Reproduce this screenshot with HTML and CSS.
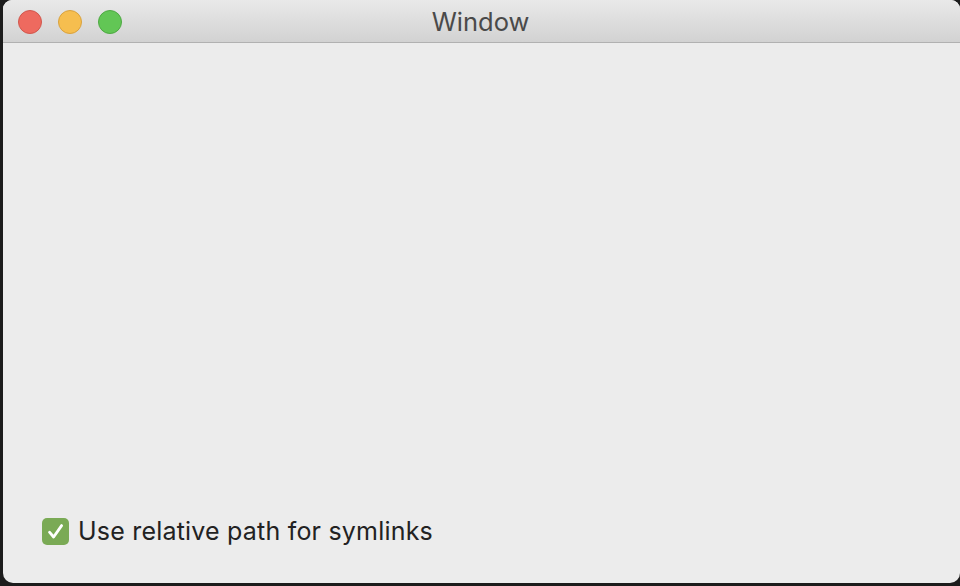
FILE: index.html
```html
<!DOCTYPE html>
<html>
<head>
<meta charset="utf-8">
<link rel="stylesheet" href="styles.css">
</head>
<body>
<div class="window">
  <div class="titlebar">
    <div class="lights">
      <span class="light red"></span>
      <span class="light yellow"></span>
      <span class="light green"></span>
    </div>
    <div class="title">Window</div>
  </div>
  <div class="content">
    <label class="check">
      <span class="box"><svg width="27" height="27" viewBox="0 0 27 27"><path d="M7.5 14.2 L11.6 19 L19.6 7.6" fill="none" stroke="#fff" stroke-width="2.8" stroke-linecap="round" stroke-linejoin="round"/></svg></span>
      <span class="label">Use relative path for symlinks</span>
    </label>
  </div>
</div>
</body>
</html>
```
FILE: styles.css
```css
html, body {
  margin: 0;
  padding: 0;
  background: #1c1c1c;
  width: 960px;
  height: 586px;
  overflow: hidden;
}
.window {
  margin-left: 3px;
  width: 957px;
  height: 583px;
  background: #ececec;
  border-radius: 9px 9px 10px 10px;
  overflow: hidden;
  display: flex;
  flex-direction: column;
  font-family: "Inter", "Noto Sans", sans-serif;
}
.titlebar {
  height: 43px;
  box-sizing: border-box;
  background: linear-gradient(#e9e9e9, #d2d2d2);
  border-bottom: 1px solid #b1b1b1;
  position: relative;
  display: flex;
  align-items: center;
  justify-content: center;
}
.lights {
  position: absolute;
  left: 15px;
  top: 10px;
  display: flex;
  gap: 16px;
}
.light {
  width: 24px;
  height: 24px;
  border-radius: 50%;
  box-sizing: border-box;
}
.red { background: #ee6a5f; border: 1px solid #d1574d; }
.yellow { background: #f6be4f; border: 1px solid #d9a23e; }
.green { background: #62c655; border: 1px solid #4ea943; }
.title {
  font-size: 25.5px;
  color: #4a4a4a;
  margin-left: -2px;
  margin-top: 1px;
}
.content {
  flex: 1;
  display: flex;
  align-items: flex-end;
  padding: 0 0 37px 39px;
}
.check {
  display: flex;
  align-items: center;
  gap: 9px;
}
.box {
  width: 27px;
  height: 27px;
  border-radius: 5px;
  background: #7aaa55;
  display: flex;
}
.label {
  font-size: 25px;
  letter-spacing: 0.2px;
  color: #222;
}
```
